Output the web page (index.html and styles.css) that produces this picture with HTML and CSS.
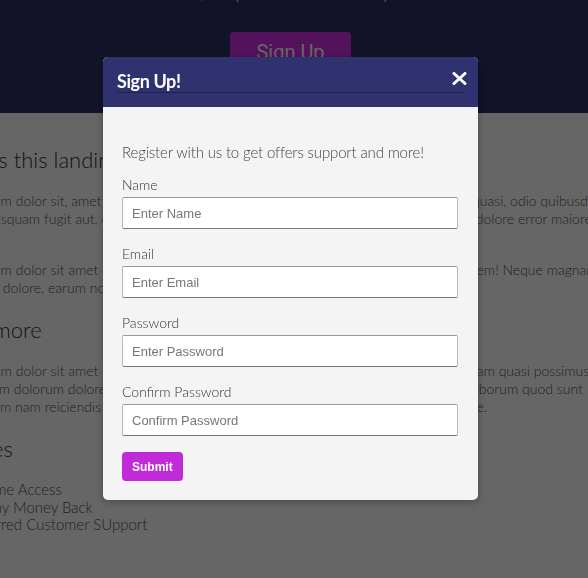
FILE: index.html
```html
<!DOCTYPE html>
<html lang="en">
<head>
<meta charset="utf-8">
<title>Landing</title>
<link rel="stylesheet" href="styles.css">
</head>
<body>
<div class="app">
  <header class="hero">
    <p class="hero-text">Our account is free, keep it and save money on all orders now</p>
    <a class="hero-btn" href="#">Sign Up</a>
  </header>
  <main class="page">
    <div class="content">
      <h2 class="heading">What is this landing page?</h2>
      <p class="para">
        <span class="line"><span class="l">Lorem ipsum dolor sit, amet consectetur adipisicing elit. Dolorum officiis ratione ipsa</span><span class="r">quasi, odio quibusdam sequi</span></span>
        <span class="line"><span class="l">Neque, quisquam fugit aut, eos quos veniam deserunt voluptas nihil</span><span class="r"> dolore error maiores.</span></span>
      </p>
      <p class="para">
        <span class="line"><span class="l">Lorem ipsum dolor sit amet consectetur adipisicing elit. Sapiente, quos totam</span><span class="r">rem! Neque magnam</span></span>
        <span class="line"><span class="l">Voluptates dolore, earum nobis.</span><span class="r"></span></span>
      </p>
      <h2 class="heading">Learn more</h2>
      <p class="para">
        <span class="line"><span class="l">Lorem ipsum dolor sit amet consectetur, adipisicing elit. Molestias</span><span class="r">tam quasi possimus</span></span>
        <span class="line"><span class="l">Quae harum dolorum dolores natus quibusdam</span><span class="r">aborum quod sunt</span></span>
        <span class="line"><span class="l">Magni totam nam reiciendis officia amet sapiente</span><span class="r">re.</span></span>
      </p>
      <h2 class="heading">Services</h2>
      <ul class="perks">
        <li>Lifetime Access</li>
        <li>30 Day Money Back</li>
        <li>Preferred Customer SUpport</li>
      </ul>
    </div>
  </main>
</div>

<div class="overlay">
  <div class="modal">
    <div class="modal-header">
      <div class="modal-title">
        <h2>Sign Up!</h2>
        <span class="close" aria-label="Close">
          <svg width="15" height="13" viewBox="0 0 15 13"><path d="M2 1.5 L13 11.5 M13 1.5 L2 11.5" stroke="#fff" stroke-width="3" stroke-linecap="round" fill="none"/></svg>
        </span>
      </div>
    </div>
    <form class="modal-body">
      <p class="intro">Register with us to get offers support and more!</p>
      <div class="field">
        <label for="name">Name</label>
        <input id="name" type="text" placeholder="Enter Name">
      </div>
      <div class="field">
        <label for="email">Email</label>
        <input id="email" type="text" placeholder="Enter Email">
      </div>
      <div class="field">
        <label for="pw">Password</label>
        <input id="pw" type="password" placeholder="Enter Password">
      </div>
      <div class="field">
        <label for="pw2">Confirm Password</label>
        <input id="pw2" type="password" placeholder="Confirm Password">
      </div>
      <button class="submit" type="button">Submit</button>
    </form>
  </div>
</div>
</body>
</html>
```
FILE: styles.css
```css
html, body {
  margin: 0;
  height: 100%;
  overflow: hidden;
}
body {
  font-family: Lato, "Noto Sans", sans-serif;
  background: #fff;
}
.hero {
  display: flow-root;
  background: #2e3066;
  text-align: center;
  padding: 0 7px 41px 0;
}
.hero-text {
  margin: -20px 0 0;
  color: #fff;
  font-size: 18px;
  font-weight: 300;
  line-height: 24px;
  white-space: nowrap;
}
.hero-btn {
  display: inline-block;
  margin-top: 28px;
  width: 121px;
  height: 40px;
  line-height: 40px;
  border-radius: 4px;
  background: #cf2fe4;
  color: #fff;
  font-family: Roboto, "Liberation Sans", sans-serif;
  font-size: 20px;
  text-decoration: none;
}
.page {
  display: flex;
  justify-content: center;
  padding-right: 7px;
}
.content {
  flex: none;
  width: 711px;
  padding-top: 34px;
}
.heading {
  margin: 0 0 19px;
  font-size: 22px;
  font-weight: 300;
  line-height: 26px;
  color: #333;
}
.para + .heading,
.perks + .heading {
  margin-top: 20px;
}
.para {
  margin: 0;
  font-size: 14px;
  font-weight: 300;
  line-height: 18px;
  color: #555;
}
.para + .para {
  margin-top: 33px;
}
.line {
  display: grid;
  grid-template-columns: 537px max-content;
  white-space: pre;
}
.line .l {
  overflow: hidden;
}
.perks {
  list-style: none;
  margin: 0;
  padding-left: 27px;
  font-size: 15px;
  font-weight: 300;
  line-height: 17.5px;
  color: #555;
}
.overlay {
  position: fixed;
  inset: 0;
  box-sizing: border-box;
  padding: 57px 7px 0 0;
  background: rgba(0, 0, 0, 0.6);
  display: flex;
  justify-content: center;
  align-items: flex-start;
}
.modal {
  width: 375px;
  background: #f4f4f4;
  border-radius: 5px;
  overflow: hidden;
  box-shadow: 0 2px 8px rgba(0, 0, 0, 0.3);
}
.modal-header {
  background: #303270;
  padding: 14px 15px 14px 14px;
}
.modal-title {
  display: flex;
  justify-content: space-between;
  align-items: flex-start;
  height: 21px;
  border-bottom: 1px solid rgba(0, 0, 0, 0.3);
}
.modal-title h2 {
  margin: 0;
  color: #fff;
  font-size: 18px;
  font-weight: 700;
  line-height: 21px;
  letter-spacing: -0.4px;
}
.close {
  display: block;
  margin: 1px -4px 0 0;
  line-height: 0;
}
.modal-body {
  display: block;
  margin: 0;
  padding: 36px 20px 19px 19px;
}
.intro {
  margin: 0 0 15px;
  font-size: 15px;
  font-weight: 300;
  line-height: 18px;
  letter-spacing: -0.15px;
  color: #444;
}
.field {
  margin-bottom: 16px;
}
.field label {
  display: block;
  margin-bottom: 4px;
  font-size: 14px;
  font-weight: 300;
  line-height: 17px;
  color: #333;
}
.field input {
  display: block;
  box-sizing: border-box;
  width: 100%;
  height: 32px;
  margin: 0;
  padding: 0 9px;
  border: 1px solid;
  border-color: #9a9a9a #b8b8b8 #777 #b8b8b8;
  border-radius: 2px;
  background: #fff;
  font-family: "Liberation Sans", Arial, sans-serif;
  font-size: 13px;
  color: #333;
}
.field input::placeholder {
  color: #777;
}
.submit {
  display: block;
  height: 29px;
  padding: 0 10px;
  border: none;
  border-radius: 4px;
  background: #c02ad8;
  color: #fff;
  font-family: "Liberation Sans", Arial, sans-serif;
  font-size: 12px;
  font-weight: 700;
}
```
